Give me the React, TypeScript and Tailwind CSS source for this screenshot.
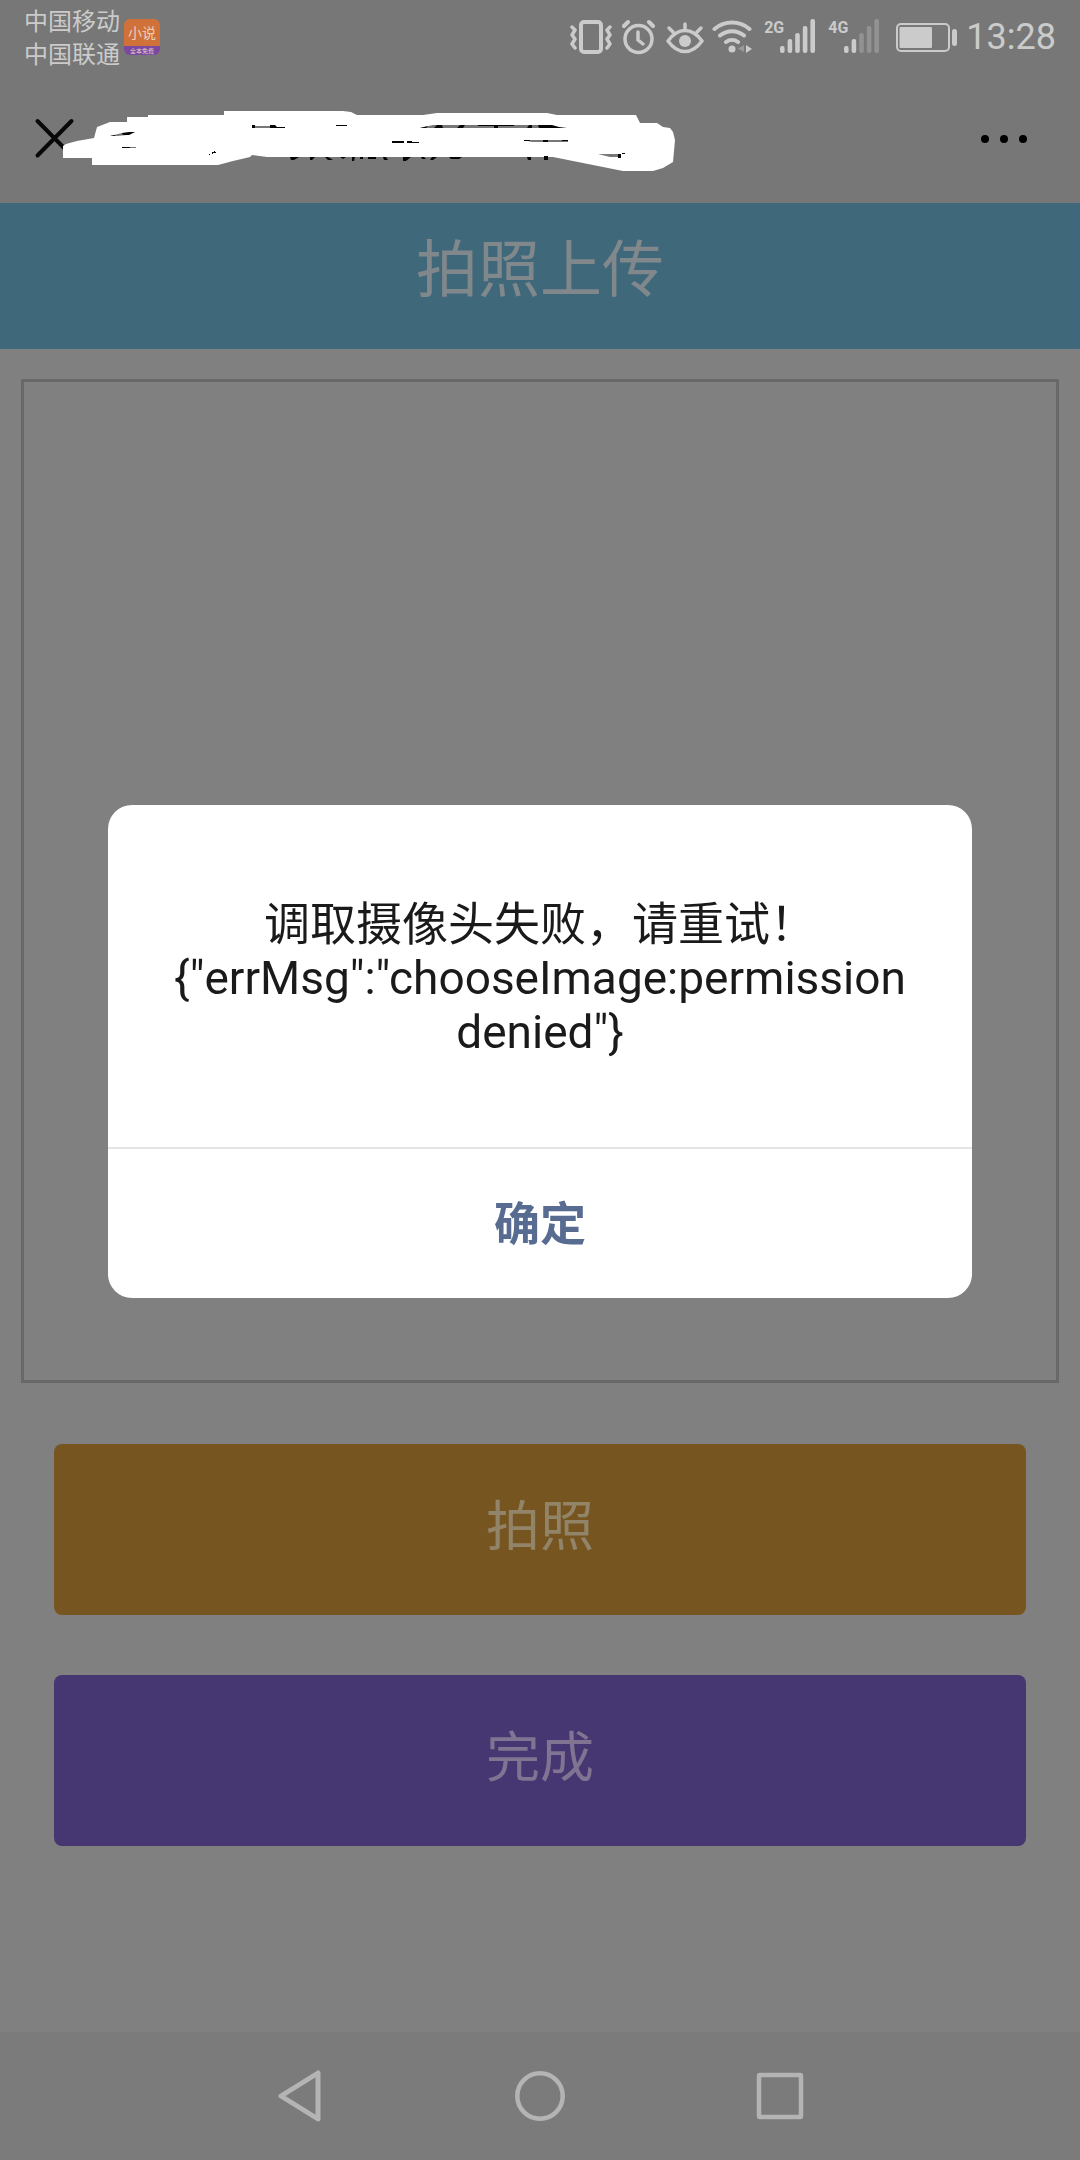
import React from "react";

const LIGHT = "#cbcbcb";

function VibrateIcon() {
  return (
    <svg width="42" height="40" viewBox="568 16 42 40" fill="none" stroke={LIGHT} aria-hidden="true">
      <rect x="579" y="21" width="20" height="30" rx="3" strokeWidth="4" />
      <path d="M570 26l3 3-3 5 3 4-3 5 3 4M608 26l-3 3 3 5-3 4 3 5-3 4" strokeWidth="3.500" strokeLinecap="round" strokeLinejoin="round" />
    </svg>
  );
}

function AlarmIcon() {
  return (
    <svg width="34" height="40" viewBox="622 16 34 40" fill="none" stroke={LIGHT} strokeLinecap="round" aria-hidden="true">
      <circle cx="638.5" cy="38" r="13.5" strokeWidth="3.500" />
      <path d="M638 31v8l5 4" strokeWidth="3.500" />
      <path d="M624 25l4-4M653 25l-4-4" strokeWidth="4" />
    </svg>
  );
}

function EyeIcon() {
  return (
    <svg width="38" height="40" viewBox="666 16 38 40" fill="none" stroke={LIGHT} strokeLinecap="round" strokeLinejoin="round" aria-hidden="true">
      <path d="M668 40c5-7 11-10.500 17-10.500s12 3.500 17 10.500c-5 7-11 10.500-17 10.500S673 47 668 40z" strokeWidth="3.500" />
      <circle cx="685" cy="40" r="6" fill={LIGHT} stroke="none" />
      <path d="M685 28v-5M673 31l-4-4M697 31l4-4" strokeWidth="3.500" />
    </svg>
  );
}

function WifiIcon() {
  return (
    <svg width="40" height="40" viewBox="712 16 40 40" fill="none" stroke={LIGHT} strokeLinecap="round" aria-hidden="true">
      <path d="M714.500 28a27 27 0 0 1 35 0M720 34.500a19 19 0 0 1 24 0M726 41a10 10 0 0 1 12 0" strokeWidth="4" />
      <circle cx="732" cy="48" r="3.500" fill={LIGHT} stroke="none" />
      <path d="M744 44v7l-6-3.500z" fill="#999999" stroke="none" />
      <path d="M746 44v8l6-4z" fill={LIGHT} stroke="none" />
    </svg>
  );
}

function Signal({ label, level }: { label: string; level: number }) {
  const heights = [7, 14, 20, 27, 34];
  return (
    <div className="flex">
      <span className="font-['Roboto'] text-[16px] font-bold leading-[22px]">{label}</span>
      <svg className="-ml-1" width="36" height="40" viewBox="0 0 36 40" aria-hidden="true">
        {heights.map((h, i) => (
          <rect key={h} x={i * 7.6} y={36 - h} width="4.600" height={h} rx="2" fill={i < level ? LIGHT : "#929292"} />
        ))}
      </svg>
    </div>
  );
}

function BatteryIcon() {
  return (
    <svg width="62" height="40" viewBox="896 16 62 40" aria-hidden="true">
      <rect x="897" y="23" width="52" height="27" rx="4" fill="none" stroke={LIGHT} strokeWidth="2" />
      <rect x="899.500" y="26" width="32.500" height="21" rx="1" fill={LIGHT} />
      <rect x="952" y="28" width="5" height="17" rx="2.500" fill={LIGHT} />
    </svg>
  );
}

function StatusBar() {
  return (
    <div className="flex h-[74px] items-center justify-between pl-6 pr-6 text-[#cbcbcb]">
      <div className="flex items-center gap-1">
        <div className="pt-[3px] text-[24px] leading-[33px]">
          <div>中国移动</div>
          <div>中国联通</div>
        </div>
        <div className="flex h-9 w-9 flex-col overflow-hidden rounded-md bg-[#d0713a] text-center text-[#ecd0c0]">
          <span className="h-[27px] text-[14px] leading-[28px]">小说</span>
          <span className="h-[9px] whitespace-nowrap bg-[#7948a0] text-[6px] leading-[9px]">全本免费</span>
        </div>
      </div>
      <div className="flex items-center gap-2">
        <div className="flex gap-[10px]">
          <VibrateIcon />
          <AlarmIcon />
          <EyeIcon />
        </div>
        <div className="flex gap-3 pr-2">
          <WifiIcon />
          <Signal label="2G" level={5} />
          <Signal label="4G" level={2} />
        </div>
        <BatteryIcon />
        <time className="font-['Roboto'] text-[36px] leading-[40px]">13:28</time>
      </div>
    </div>
  );
}

/* Page title hidden under white brush strokes */
function CoveredTitle() {
  return (
    <svg width="613" height="64" viewBox="63 107 613 64" overflow="visible" role="img" aria-label="title">
      <path
        d="M63 146L66 144 77 141 94 138 97 127 110 122H127V117H148V115H224V111H343L351 112 357 115H423L437 113H547L557 115H636L640 123H657L663 127 670 128 673 132 675 140 673 162 663 168 653 171H623L593 165 553 157H267L252 155 250 157 233 161 218 165H92V158H63z"
        fill="#fff"
      />
      <path
        d="M110 136l12-3 13-1-8 3-10 1zM252 126h24v2h-24zM420 128l13-3h107l10 3zM524 140h44v2h-36zM122 147h14v1h-14zM598 154h20v3h-8z"
        fill="#777777"
      />
      <g fill="#050505">
        <path d="M110 136l5-1v1zM122 133l8-1 5 0-6 3h-6zM122 147h8v1h-8zM212 152h2v-1h1v1h1v1h-3v1h-1zM209 154h1v1h-1z" />
        <path d="M252 125h3v3h-3zM270 125h5l2 2h8v1h-15zM336 125h11v1h-11z" />
        <path d="M437 125h5l1 3h-9zM460 125h5l-2 3h-6zM478 125h36v1h-36zM494 125h4v3h-4zM529 125h3v3h-5zM538 125h14l7 2 8 1h-28zM420 128l8-2-2 2z" />
        <path d="M392 141h12v2h-12zM407 141h5v2h-5zM412 142h7v1h-7zM543 140h5v2h-5zM524 140h6v1h-6zM562 140h6v1h-6zM618 154h3v4h-3zM622 153h3v1h-3z" />
        <path d="M290 157h9l-5 3h-3zM310 157h5l-3 3h-2zM325 157h3l5 3h-5zM340 157h6l-3 2zM352 157h3l-1 4h-2zM360 157h3v2h-3zM368 157h8v2h-8zM383 157h3l2 3h-4zM403 157h8l-5 4h-3zM421 157h3l2 2h-4zM432 157h5l-4 3h-3zM449 157h13l-3 2h-8zM527 157h4v3h-3zM544 156h4v4h-4z" />
      </g>
    </svg>
  );
}

function AppBar() {
  return (
    <header className="flex h-[129px] items-center justify-between pl-9 pr-[53px]">
      <div className="flex items-center">
        <button type="button" aria-label="关闭" className="w-[27px]">
          <svg className="overflow-visible" width="27" height="40" viewBox="36 118 27 40">
            <path d="M37.500 120L71.500 154.500M71.500 120L37.500 154.500" stroke="#080808" strokeWidth="4" strokeLinecap="round" />
          </svg>
        </button>
        <CoveredTitle />
      </div>
      <button type="button" aria-label="更多" className="flex gap-[11px]">
        <span className="h-2 w-2 rounded-full bg-black" />
        <span className="h-2 w-2 rounded-full bg-black" />
        <span className="h-2 w-2 rounded-full bg-black" />
      </button>
    </header>
  );
}

function NavBar() {
  return (
    <nav className="mt-auto flex h-32 items-center justify-center gap-[190px] bg-[#7b7b7b]">
      <button type="button" aria-label="返回">
        <svg width="50" height="56" viewBox="0 0 50 56" fill="none" stroke="#b4b4b4" strokeWidth="5" strokeLinejoin="round">
          <path d="M6 28L43 5v46z" />
        </svg>
      </button>
      <button type="button" aria-label="主页">
        <svg width="50" height="56" viewBox="0 0 50 56" fill="none" stroke="#b4b4b4" strokeWidth="4.500">
          <circle cx="25" cy="28" r="22.700" />
        </svg>
      </button>
      <button type="button" aria-label="最近任务">
        <svg width="50" height="56" viewBox="0 0 50 56" fill="none" stroke="#b4b4b4" strokeWidth="4.500">
          <rect x="4" y="7" width="42" height="42" rx="1" />
        </svg>
      </button>
    </nav>
  );
}

function ErrorDialog() {
  return (
    <div className="fixed inset-0 flex items-center justify-center pb-32 pt-[70px]">
      <div role="alertdialog" aria-describedby="error-message" className="w-4/5 overflow-hidden rounded-3xl bg-white text-center text-[46px]">
        <p id="error-message" className="px-16 pb-[88px] pt-[92px] leading-[54px] text-[#1a1a1a]">
          调取摄像头失败，请重试！
          <br />
          {'{"errMsg":"chooseImage:permission denied"}'}
        </p>
        <button type="button" className="h-[151px] w-full border-t-2 border-[#e4e4e4] pt-[2px] font-bold text-[#586b91]">
          确定
        </button>
      </div>
    </div>
  );
}

export default function App() {
  return (
    <div lang="zh-CN" className="flex min-h-screen flex-col bg-[#808080] font-['Roboto','Noto_Sans_CJK_SC',sans-serif]">
      <div className="bg-[#777777]">
        <StatusBar />
        <AppBar />
      </div>
      <h1 className="h-[146px] bg-[#3f687a] text-center text-[62px] leading-[136px] text-[#80888c]">拍照上传</h1>
      <main className="flex flex-col px-[21px] pt-[30px]">
        <div className="h-[1004px] border-[3px] border-[#686868]" />
        <div className="flex flex-col gap-[60px] px-[33px] py-[61px] text-[54px] leading-[165px]">
          <button type="button" className="h-[171px] rounded-lg bg-[#775520] pb-1 text-[#918468]">
            拍照
          </button>
          <button type="button" className="h-[171px] rounded-lg bg-[#463671] pb-1 text-[#807492]">
            完成
          </button>
        </div>
      </main>
      <NavBar />
      <ErrorDialog />
    </div>
  );
}
